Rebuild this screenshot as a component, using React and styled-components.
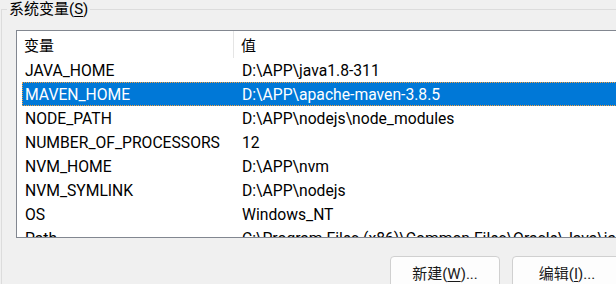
import React from "react";
import styled, { createGlobalStyle } from "styled-components";

const Global = createGlobalStyle`
  html, body { margin: 0; padding: 0; background: #f0f0f0; overflow: hidden; }
  body { font-family: Roboto, "Noto Sans CJK SC", sans-serif; color: #000; }
`;

const Page = styled.div`
  width: 616px;
  height: 284px;
  overflow: hidden;
  background: #f0f0f0;
`;

const Group = styled.fieldset`
  margin: 0 0 0 1px;
  padding: 0;
  width: 800px;
  height: 330px;
  border: 1px solid #dcdcdc;
  box-sizing: border-box;
  min-width: 0;
`;

const Legend = styled.legend`
  margin-left: 5px;
  padding: 0 2px;
  font-size: 15px;
  line-height: 18px;
  font-family: Roboto, "Noto Sans CJK SC", sans-serif;
  color: #000;
  u { text-decoration: underline; text-underline-offset: 2px; }
`;

const Body = styled.div`
  padding: 12px 0 0 14px;
  display: flex;
  flex-direction: column;
`;

const ListBox = styled.div`
  width: 720px;
  height: 208px;
  box-sizing: border-box;
  border: 1px solid #828790;
  background: #fff;
  overflow: hidden;
  font-size: 15.7px;
`;

const Header = styled.div`
  display: grid;
  grid-template-columns: 217px 1fr;
  height: 27px;
`;

const HeaderCell = styled.div`
  display: flex;
  align-items: center;
  padding-left: 7px;
  font-size: 15px;
  border-right: ${(p) => (p.$sep ? "1px solid #e5e5e5" : "none")};
`;

const Row = styled.div`
  display: grid;
  grid-template-columns: 217px 1fr;
  height: 24px;
  align-items: center;
  margin-left: 5px;
  padding-left: 3px;
  white-space: nowrap;
  background: ${(p) => (p.$selected ? "#0078d7" : "transparent")};
  color: ${(p) => (p.$selected ? "#fff" : "#000")};
  outline: ${(p) => (p.$selected ? "1px dotted #f4a040" : "none")};
  outline-offset: -1px;
`;

const Cell = styled.span`
  overflow: visible;
`;

const ButtonRow = styled.div`
  display: flex;
  gap: 12px;
  margin-top: 18px;
  padding-left: 374px;
`;

const Button = styled.button`
  width: 110px;
  height: 33px;
  flex: none;
  border: 1px solid #d0d0d0;
  border-radius: 4px;
  background: #fdfdfd;
  font-family: Roboto, "Noto Sans CJK SC", sans-serif;
  font-size: 15px;
  color: #1a1a1a;
  padding: 0;
  u { text-decoration: underline; text-underline-offset: 2px; }
`;

const rows = [
  ["JAVA_HOME", "D:\\APP\\java1.8-311"],
  ["MAVEN_HOME", "D:\\APP\\apache-maven-3.8.5"],
  ["NODE_PATH", "D:\\APP\\nodejs\\node_modules"],
  ["NUMBER_OF_PROCESSORS", "12"],
  ["NVM_HOME", "D:\\APP\\nvm"],
  ["NVM_SYMLINK", "D:\\APP\\nodejs"],
  ["OS", "Windows_NT"],
  ["Path", "C:\\Program Files (x86)\\Common Files\\Oracle\\Java\\javapath;C:\\Windows"],
];

export default function App() {
  return (
    <Page>
      <Global />
      <Group>
        <Legend>
          系统变量(<u>S</u>)
        </Legend>
        <Body>
          <ListBox>
            <Header>
              <HeaderCell $sep>变量</HeaderCell>
              <HeaderCell>值</HeaderCell>
            </Header>
            {rows.map(([k, v]) => (
              <Row key={k} $selected={k === "MAVEN_HOME"}>
                <Cell>{k}</Cell>
                <Cell>{v}</Cell>
              </Row>
            ))}
          </ListBox>
          <ButtonRow>
            <Button>
              新建(<u>W</u>)...
            </Button>
            <Button>
              编辑(<u>I</u>)...
            </Button>
          </ButtonRow>
        </Body>
      </Group>
    </Page>
  );
}
